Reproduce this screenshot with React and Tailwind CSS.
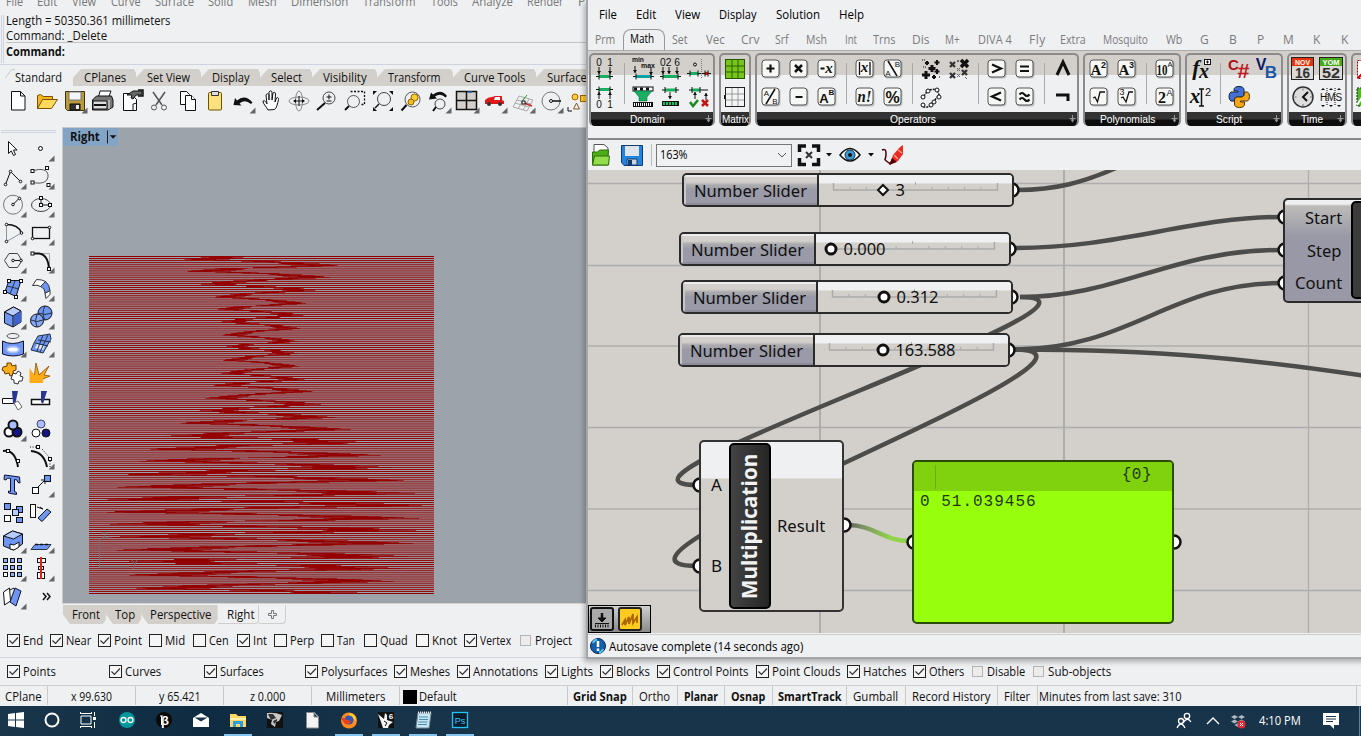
import React, { useLayoutEffect, useRef } from "react";

/* Text fitted to a given width once mounted: condensed when too wide, tracked when too narrow */
function T({ w, children, className = "" }) {
  const ref = useRef(null);
  useLayoutEffect(() => {
    const el = ref.current;
    el.style.letterSpacing = "0px";
    el.style.transform = "none";
    el.style.marginRight = "0px";
    const n = String(children).length;
    const nat = el.getBoundingClientRect ? el.offsetWidth : w;
    if (!w || n < 2) return;
    if (nat > w) {
      el.style.transformOrigin = "0 50%";
      el.style.transform = `scaleX(${w / nat})`;
      el.style.marginRight = w - nat + "px";
    } else el.style.letterSpacing = (w - nat) / (n - 1) + "px";
  }, [w, children]);
  return <span ref={ref} className={"inline-block shrink-0 whitespace-pre leading-none " + className}>{children}</span>;
}

/* A row of labels; each cell is as wide as the distance to the next stop */
function Strip({ start = 0, items, render, className }) {
  return (
    <div className={"flex overflow-hidden " + className}>
      <div className="h-full shrink-0" style={{ width: items[0][0] - start }} />
      {items.map((it, i) => (
        <div key={i} className="flex h-full shrink-0 items-center" style={{ width: (items[i + 1] ? items[i + 1][0] : it[0] + 120) - it[0] }}>
          {render ? render(it, i) : <T w={it[1]}>{it[2]}</T>}
        </div>
      ))}
    </div>
  );
}

const Corner = () => <path d="M26.5 20.5v6h-6z" fill="#666" />;
const Sq = ({ x, y }) => <rect x={x - 1.5} y={y - 1.5} width="3" height="3" fill="#fff" stroke="#111" />;
const Dot = ({ x, y }) => <circle cx={x} cy={y} r="1.3" fill="#fff" stroke="#111" />;
const Ic = ({ children, className = "h-7 w-7" }) => (
  <svg viewBox="0 0 28 28" className={"shrink-0 " + className} fill="none" stroke="#111" strokeWidth="1">{children}</svg>
);
const Cn = () => <g stroke="none"><Corner /></g>;
const BL = "#6f95f2", LB = "#b6ccff";

const topIcons = [
  <path d="M6.500 4.500h9l4.500 4.500v14h-13.500zM15.500 4.500v4.500h4.500" fill="#fff" />,
  <g><path d="M4.500 21.500v-13l3-1 3 2h9v4" fill="#f5b51c" stroke="#7a5200" /><path d="M4.500 21.500l5-9h15l-6 9z" fill="#ffd95c" stroke="#7a5200" /></g>,
  <g><path d="M4.500 4.500h19v19h-17l-2-2z" fill="#b99a3c" stroke="#3b3210" /><path d="M8 5h12v8h-12z" fill="#f4f6fb" stroke="#777" /><path d="M9 17h10v6h-10z" fill="#333" /><path d="M15 18h3v4h-3z" fill="#eee" stroke="none" /><Cn /></g>,
  <g><path d="M9 12l2-8h11l-3 8" fill="#fff" /><path d="M3.500 13l4-4h15l1.500 4v7l-5 3h-15.500z" fill="#777" stroke="#111" /><path d="M4 14h14v8h-14z" fill="#ddd" /><path d="M5 18h12" strokeWidth="2" /><path d="M20 13v9" stroke="#eee" /></g>,
  <g><path d="M6.500 6.500h7l6 6v11h-13z" fill="#fff" /><path d="M10 8l6-4h9v4h-6l-3 4-2-1 1-3z" fill="#666" /><path d="M21 3h5v6h-5" strokeWidth="1.500" /><path d="M16 23v-6l4-1" /></g>,
  <g stroke="#555"><path d="M8 5l9 13M20 5l-9 13" strokeWidth="1.500" /><circle cx="9" cy="20.500" r="2.500" /><circle cx="19" cy="20.500" r="2.500" /></g>,
  <g fill="#fff"><path d="M7.500 4.500h6l3 3v10h-9z" /><path d="M12.500 8.500h6l4 4v11h-10z" /><path d="M18.500 8.500v4h4" /></g>,
  <g><rect x="7.500" y="5.500" width="13" height="17.500" rx="1" fill="#fbe080" stroke="#6b5300" /><path d="M10.500 4.500h7v4h-7z" fill="#ddd" stroke="#333" /></g>,
  <g><path d="M4.500 18l1.500-7 2 2.500q8-7 15.500 2l-1.500 1.500q-6-5-11.500-.500l2 2z" fill="#111" stroke="none" /><Cn /></g>,
  <path d="M11 23c-2-4-5-6-5-9 2-1 3 1 4 3l-1-9c1-2 2.500-1 3 0v5l0-8c1-1.500 2.500-1.500 3 0v8l1-7c1-1 2.500-1 2.500 1l-.500 8 1.500-4c1-1 2.500 0 2 1.500-1 4-1.500 8-4 10z" fill="#fff" />,
  <g stroke="#888"><ellipse cx="14" cy="14" rx="10" ry="4" /><ellipse cx="14" cy="14" rx="3.500" ry="10" /><path d="M9 14h10M14 9v10" stroke="#111" /><path d="M8 14l3-2v4zM20 14l-3-2v4z" fill="#111" stroke="none" /></g>,
  <g><circle cx="16" cy="11" r="6" stroke="#444" /><path d="M12 16l-8 7" strokeWidth="2" /><path d="M13.500 10h5M16 7.500v5M13.500 14h5" /></g>,
  <g><path d="M9.500 4.500h14v13h-3" strokeDasharray="2 1.500" strokeWidth="1.300" /><circle cx="12.500" cy="14.500" r="6" fill="#eff0f2" stroke="#555" /><path d="M8 19l-4 4" strokeWidth="2" /></g>,
  <g><circle cx="15" cy="12" r="6.500" stroke="#444" /><path d="M10 17l-4 4" strokeWidth="1.500" /><path d="M4 4h4l-4 4zM24 4h-4l4 4zM4 24v-4l4 4zM24 24v-4l-4 4z" fill="#111" stroke="none" /></g>,
  <g><circle cx="15.500" cy="12.500" r="7.500" stroke="#555" /><path d="M9.500 18l-5 5.500" strokeWidth="2" /><circle cx="17.500" cy="10.500" r="3.500" fill="#ffcf2a" stroke="#8a6300" /><circle cx="14" cy="15" r="3" fill="#f5bd1d" stroke="#8a6300" /></g>,
  <g><path d="M4 12.500l2-7 2 2q8-6 14 1.500l-1.500 1.500q-5-5-10.500-1l2 2z" fill="#111" stroke="none" /><circle cx="15" cy="17" r="5" stroke="#444" /><path d="M11 20l-3 4" strokeWidth="2" /><Cn /></g>,
  <g><rect x="3.500" y="4.500" width="20" height="18" fill="#d3d0cb" strokeWidth="1.500" /><path d="M13.500 4v18M3 13.500h20" strokeWidth="1.500" /><path d="M15 5h4" stroke="#16b" strokeWidth="1.500" /><Cn /></g>,
  <g stroke="none"><path d="M4 13q3-3 7-3l3-1h7v4l2 1v3h-19z" fill="#e01818" /><path d="M14 10h5v3h-6z" fill="#fff" /><circle cx="8" cy="17" r="2" fill="#333" /><circle cx="19" cy="17" r="2" fill="#333" /><Corner /></g>,
  <g stroke="#aaa"><path d="M4 20l6-11 14 4-6 11zM6 16l14 4M8 13l14 4M9 22l6-11M14 23l6-11" /><path d="M14 13l4-5" stroke="#1a1" /><path d="M15 16l8 3" stroke="#c22" strokeWidth="1.500" /><Sq x={14.500} y={15.500} /><Cn /></g>,
  <g><circle cx="14" cy="14" r="9" stroke="#777" /><path d="M14 14h10" strokeWidth="1.500" /><circle cx="14" cy="14" r="1.500" fill="#fff" /><Cn /></g>,
  <g><circle cx="10" cy="10" r="3" fill="#fc3" stroke="#a60" /><rect x="15.500" y="8.500" width="6" height="6" fill="#fc3" stroke="#a60" /><path d="M11.500 16l-3 6h6z" stroke="#852" /><path d="M3 20v4h4" /></g>,
];

const sideIcons = [
  [<path d="M8.500 6.500v12l2.800-2.600 2.200 4.600 2-1-2-4.500h3.600z" fill="#fff" />, <g><circle cx="12.500" cy="13.500" r="2" /><Cn /></g>],
  [<g><path d="M5.500 21.500l5-13 10 10" /><Dot x={5.500} y={21.500} /><Dot x={10.500} y={8.500} /><Dot x={20.500} y={18.500} /><Cn /></g>,
    <g><path d="M5 8C12 5 21 6 20 14 19 20 12 21 5 19.500" stroke="#555" /><Sq x={4.500} y={8} /><Sq x={19} y={5} /><Sq x={4.500} y={19.500} /><Sq x={20.500} y={22} /><Cn /></g>],
  [<g><circle cx="13" cy="13.700" r="9.500" stroke="#777" /><path d="M13 13.500l6-6" /><Dot x={13} y={13.500} /><Dot x={19.500} y={7.500} /><Cn /></g>,
    <g><ellipse cx="13" cy="14" rx="9.500" ry="6.500" stroke="#444" /><path d="M13 7v7h9" /><Sq x={13} y={14} /><Sq x={13} y={7} /><Sq x={22} y={14} /><Cn /></g>],
  [<g><path d="M6.500 5.500v17l15-8.500" stroke="#8a93a5" /><path d="M6.500 5.500q12 0 15 8.500" strokeWidth="1.500" /><Dot x={6.500} y={5.500} /><Dot x={6.500} y={22.500} /><Dot x={21.500} y={14} /><Cn /></g>,
    <g><rect x="4.500" y="8.500" width="17" height="11" strokeWidth="1.300" /><Dot x={4.500} y={19.500} /><Dot x={21.500} y={8.500} /><Cn /></g>],
  [<g><path d="M4.500 13.500l4.500-7h8.500l4.500 7-4.500 7h-8.500z" stroke="#444" /><path d="M13 13.500h8" /><Dot x={13} y={13.500} /><Dot x={21} y={13.500} /><Cn /></g>,
    <g><path d="M5 6.500h16.500v15" stroke="#aaa" /><path d="M5 6.500h6q9 1 10 15" strokeWidth="2" /><Sq x={4.500} y={6.500} /><Sq x={21} y={22} /><Cn /></g>],
  [<g><path d="M9 5.500h12l-5 16-11-5z" fill={BL} /><path d="M15 6l-5 13M7 11l12 3" stroke="#234" /><Sq x={9} y={6} /><Sq x={21} y={6} /><Sq x={5} y={17} /><Sq x={16} y={22} /><Cn /></g>,
    <g><path d="M4.500 10.500l4-6q6 0 9 2l-5 5q-3-2-8-1z" fill="#fff" stroke="#333" /><path d="M12.500 11.500l5-5q4 3 4.500 9l-5 3q0-5-4.500-7z" fill={BL} stroke="#234" /><path d="M17 18.500l5-3v4l-4 4z" fill="#fff" stroke="#333" /><Cn /></g>],
  [<g><path d="M4.500 9l9-5 7.500 4v11l-8 5-8.500-4z" fill={BL} /><path d="M4.500 9l9-5 7.500 4-8 5z" fill={LB} /><path d="M13 13v11" /><path d="M14 13l7-5v11l-7 4z" fill="#3c63cf" stroke="none" /><Cn /></g>,
    <g><circle cx="17" cy="10" r="7" fill={BL} /><path d="M10 10q7 3 14 0M17 3q-4 7 0 14" stroke="#234" /><circle cx="9" cy="17.500" r="6.500" fill="#86a6f5" /><path d="M3 17q6 3 12 0M9 11q-3 7 0 13" stroke="#234" /><Cn /></g>],
  [<g><ellipse cx="13" cy="5" rx="6" ry="2.500" stroke="#555" /><path d="M2.500 10q10 5 21 0v13q-10 4-21 0z" fill={BL} stroke="#113" /><ellipse cx="13" cy="18.500" rx="6" ry="3" fill="#fff" stroke="#a5bbf5" strokeWidth="2" /><Cn /></g>,
    <g><path d="M10 5l12-2 1 5-8 14-12-3 3-7z" fill={BL} stroke="#234" /><path d="M9 13l8 2-2 4-8-2z" fill="#dce6ff" stroke="none" /><path d="M7 12l13 3M10 9l13 2M15 4l-6 16M20 4l-8 17" stroke="#234" /><Cn /></g>],
  [<g><path d="M3 8l4-1 0-3 4 0 1 3 4-1 0 5-3 1 1 4-4 1-1-3-4 1-1-3-2-1z" fill="#ffae1a" stroke="#643b00" /><path d="M13 14l3 1 2-3 3 2-1 3 3 1-1 4-3 0-1 3-4-1 0-3-3-1z" fill="#fff" stroke="#333" /></g>,
    <g><path d="M1.500 24v-15l5 7 1.500-12 3 12 10-9-5 9 6 1-7 3v4z" fill="#ffab16" stroke="none" /><path d="M6.500 16l1.500-12 3 12 10-9-5 9 6 1-7 3" stroke="#8c4d00" strokeWidth=".8" /></g>],
  [<g><path d="M2.500 11.500h11v5h-11z" fill="#fff" /><path d="M12 4h6l-3 14-2-2z" fill="#283593" stroke="none" /><path d="M14 16l4-2 4 6-4 3z" fill="#fff" stroke="#666" /></g>,
    <g><path d="M3.500 12.500h18v5h-18z" fill="#fff" strokeWidth="1.500" /><path d="M13 4h6l-4 13-2-2z" fill="#283593" stroke="none" /></g>],
  [<g strokeWidth="2"><circle cx="9" cy="17" r="4.500" fill="#fff" /><circle cx="17" cy="17" r="4.500" fill="#15158a" /><circle cx="13" cy="10" r="4.500" fill="#a9bdff" /><Cn /></g>,
    <g><circle cx="13" cy="9" r="4" fill="#a9bdff" stroke="#446" /><circle cx="8" cy="18" r="4" fill="#fff" /><circle cx="18" cy="18" r="4" fill="#15158a" /></g>],
  [<g><path d="M3 8q12-2 15 16" strokeWidth="2" /><Sq x={8} y={8} /><Sq x={18} y={18} /></g>,
    <g><path d="M3 8q13 1 16 16" strokeWidth="2" /><path d="M2 4h8M14 6l7 8M22 18v6" strokeDasharray="1 1.500" /><Sq x={10} y={4} /><Sq x={22} y={16} /><Cn /></g>],
  [<path d="M4.500 4l15 2 .500 6-2-.500-1-2.500-2.500-.500v12l2 1v2l-8-1.500v-2l2 .500v-13l-3-.500-1.500 2-2-.500z" fill={BL} stroke="#113" />,
    <g><path d="M8 18l9-9M17 9v4M17 9h-4" /><rect x="4.500" y="16.500" width="6" height="6" fill="#fff" /><rect x="16.500" y="4.500" width="6" height="6" fill={BL} /><Cn /></g>],
  [<g><rect x="4.500" y="4.500" width="6" height="6" fill={BL} /><rect x="16.500" y="7.500" width="6" height="6" fill={BL} /><rect x="12.500" y="10.500" width="6" height="6" fill={LB} /><rect x="4.500" y="16.500" width="6" height="6" fill="#fff" /><rect x="16.500" y="18.500" width="6" height="5" fill={BL} /></g>,
    <g><rect x="2.500" y="5.500" width="5" height="13" fill="#fff" /><path d="M9 8l6 2M15 10l-3-2" /><path d="M10 19l9-9 4 3-9 9.500z" fill={BL} /></g>],
  [<g><path d="M3.500 9l9-5 10 3v10l-9 6-10-4z" fill={BL} /><path d="M3.500 9l9-5 10 3-9 5z" fill={LB} /><path d="M10 17l4 1 5-3v5l-5 3-4-1z" fill="#fff" /><Cn /></g>,
    <g><path d="M3 22.500l4-5h16l-4 5z" fill={BL} stroke="#234" /><path d="M7 17.500h15" strokeWidth="1.500" strokeDasharray="3 2" /><Cn /></g>],
  [<g fill="#8fadf7">{[4.500, 11.500, 18.500].map(y => [3.500, 10.500, 17.500].map(x => <rect key={x + "_" + y} x={x} y={y - 1} width="4" height="4" fill={y > 15 && x < 9 ? "#fff" : "#8fadf7"} />))}<Cn /></g>,
    <g fill="#fff"><rect x="9.500" y="3.500" width="8" height="4" /><rect x="10.500" y="11.500" width="5" height="3" /><rect x="9.500" y="17.500" width="7" height="6" /><path d="M13 2v22" stroke="#d22" strokeWidth="2" /><Cn /></g>],
  [<g><path d="M3.500 9l6-4 1 13-6 4z" fill="#fff" /><path d="M10 7l4-2 1 3" /><path d="M15 5l6 3-5 15-6-4z" fill={BL} stroke="#113" /><Cn /></g>,
    <path d="M15 10l3 3.500-3 3.500M19 10l3 3.500-3 3.500" strokeWidth="1.500" />],
];

/* Ribbon icons */
const Btn = ({ children }) => (
  <g><rect x="5.500" y="5.500" width="18" height="18" rx="3" fill="#0003" stroke="none" /><rect x="5" y="5" width="17" height="17" rx="3" fill="#f7f7f5" stroke="#555" />{children}</g>
);
const Tx = ({ x = 13.500, y = 18, s = 12, f = "Liberation Sans", b = "bold", i, c = "#111", children, w }) => (
  <text x={x} y={y} fontSize={s} fontFamily={f} fontWeight={b} fontStyle={i ? "italic" : "normal"} fill={c} stroke="none" textAnchor="middle" textLength={w} lengthAdjust="spacingAndGlyphs">{children}</text>
);
const SE = "Liberation Serif";
const Ar = ({ x, y, d = 1 }) => <g><path d={`M${x} ${y}v${7 * d}`} /><path d={`M${x - 2} ${y + 4 * d}h4l-2 ${3 * d}z`} fill="#111" stroke="none" /></g>;
const Gr = ({ x = 6, y, w = 14, c = "#18b060" }) => <g><rect x={x} y={y - 1.500} width={w} height="3" fill={c} stroke="none" /><path d={`M${x} ${y - 3}v6M${x + w} ${y - 3}v6M${x - 3} ${y}h3M${x + w} ${y}h3`} /></g>;
const SEP = "sep";
const panels = [
  { name: "Domain", w: 35, plus: true, cols: [
    [<g><Tx x={8} y={10.500} s={10} b="normal">0</Tx><Tx x={19} y={10.500} s={10} b="normal">1</Tx><Ar x={8} y={12} /><Ar x={19} y={12} /><Gr y={21.500} x={8} w={11} /></g>, <g><Gr y={6.500} x={8} w={11} /><Ar x={8} y={16} d={-1} /><Ar x={19} y={16} d={-1} /><Tx x={8} y={24.500} s={10} b="normal">0</Tx><Tx x={19} y={24.500} s={10} b="normal">1</Tx></g>],
    SEP,
    [<g><Tx x={9} y={6.500} s={8} w={12}>min</Tx><Tx x={19} y={12.500} s={8} w={14}>max</Tx><Ar x={6} y={11} /><Ar x={22} y={13} /><Gr y={21.500} x={7} w={15} c="#0aa5a0" /></g>, <g><rect x="4" y="4" width="20" height="4" fill="#fff" stroke="#111" /><path d="M5 6h18" strokeDasharray="3 3" strokeWidth="3" /><path d="M5 8h18l-5 6v4h-8v-4z" fill="#18b060" stroke="#064" strokeWidth=".5" /><path d="M4 21.500h20" strokeWidth="5" /><path d="M5 21.500h18" stroke="#fff" strokeWidth="3" strokeDasharray="1 1" /></g>],
    [<g><Tx x={13} y={10.500} s={10} b="normal" w={20}>02 6</Tx><Ar x={6} y={12} /><Ar x={12} y={12} /><Ar x={20} y={12} /><Gr y={21.500} x={6} w={15} /></g>, <g><Gr y={7} x={8} w={11} /><Ar x={13} y={9} /><path d="M5 20.500h17" stroke="#111" strokeWidth="5" /><path d="M6 20.500h15" stroke="#18c060" strokeWidth="3" strokeDasharray="2 1" /></g>],
    [<g><circle cx="10" cy="9.500" r="1.500" /><path d="M16.500 4v20" strokeDasharray="1 1" stroke="#777" /><Gr y={18.500} x={5} w={8} /><Gr y={18.500} x={20} w={3} c="#e01010" /></g>, <g><Gr y={7} x={7} w={8} /><path d="M18 7h5" /><Ar x={10} y={16} d={-1} /><Ar x={21} y={17} d={-1} /><path d="M5 19l3 4 5-6" stroke="#1a8a1a" strokeWidth="2.500" /><path d="M17 17l6 6M23 17l-6 6" stroke="#c01515" strokeWidth="2.500" /></g>],
  ] },
  { name: "Matrix", w: 27, cols: [
    [<g><rect x="4.500" y="4.500" width="19" height="19" fill="#76c41c" stroke="#255500" /><path d="M11 4v20M17 4v20M4 11h20M4 17h20" stroke="#2c6300" /></g>, <g><rect x="4.500" y="4.500" width="19" height="19" fill="#f4f4f4" stroke="#222" /><path d="M11 5v18M17 5v18M5 11h18M5 17h18" stroke="#999" /><path d="M3.500 12v4" /></g>],
  ] },
  { name: "Operators", w: 46, plus: true, cols: [
    [<Btn><path d="M9.500 13.500h8M13.500 9.500v8" strokeWidth="2.200" /></Btn>, <Btn><Tx x={9.500} y={13} s={8} b="normal">A</Tx><Tx x={18} y={21} s={8} b="normal">B</Tx><path d="M9 21l9-15" strokeWidth="1.500" /></Btn>],
    [<Btn><path d="M10 10l7 7M17 10l-7 7" strokeWidth="2.500" /></Btn>, <Btn><path d="M10.500 14h7" strokeWidth="2" /></Btn>],
    [<Btn><path d="M7.500 13.500h4" strokeWidth="2" /><Tx x={16} s={15} f={SE} i>x</Tx></Btn>, <Btn><Tx x={11} y={20} s={13}>A</Tx><Tx x={18.500} y={12} s={8}>B</Tx></Btn>],
    SEP,
    [<Btn><Tx s={15} f={SE} i y={17}>x</Tx><path d="M8.500 7v13M19 7v13" strokeWidth="1.300" /></Btn>, <Btn><Tx s={17} f={SE} i y={19} w={14}>n!</Tx></Btn>],
    [<Btn><Tx x={9} y={21} s={8} b="normal">A</Tx><Tx x={18.500} y={12} s={8} b="normal">B</Tx><path d="M9 6l9 15" strokeWidth="1.500" /></Btn>, <Btn><Tx s={16} y={19.500}>%</Tx></Btn>],
    SEP,
    [<g><path d="M9 16v8M5 20h8M15 10v7M11.500 13.500h7" strokeWidth="3" /><path d="M20 5v5M17.500 7.500h5M20 14v5M17.500 16.500h5M10 6v4M8 8h4M17 20v4M15 22h4" strokeWidth="2" /><path d="M5 5h3M6 12h3M22 22h2" strokeDasharray="1 1" /></g>, <g fill="#fff"><path d="M7 13l4-6 9-1 2 6-5 6-5 6H6" fill="none" strokeDasharray="2 1" strokeWidth="1.500" /><circle cx="6" cy="14" r="2" /><circle cx="11" cy="8" r="2" /><circle cx="20" cy="7" r="2" /><circle cx="22" cy="14" r="2" /><circle cx="17" cy="19" r="2" /><circle cx="6" cy="22" r="2" /><circle cx="14" cy="22" r="2" /></g>],
    [<g><path d="M16 5l7 7M23 5l-7 7" strokeWidth="3.500" /><path d="M5 7l5 5M10 7l-5 5M5 18l5 5M10 18l-5 5M17 15l5 5M22 15l-5 5" strokeWidth="2.300" stroke="#333" /><path d="M12 13l3 3M15 13l-3 3M12 5l2 2M14 5l-2 2M12 19l3 3M15 19l-3 3M20 22l2 2" stroke="#667" /></g>, <g />],
    SEP,
    [<Btn><path d="M9 9.500l9 4-9 4" strokeWidth="2.200" /></Btn>, <Btn><path d="M18 9.500l-9 4 9 4" strokeWidth="2.200" /></Btn>],
    [<Btn><path d="M9 11.500h9M9 16h9" strokeWidth="2.200" /></Btn>, <Btn><path d="M8.500 11.500q2.500-3 5 0t5 0M8.500 16.500q2.500-3 5 0t5 0" strokeWidth="2" /></Btn>],
    SEP,
    [<path d="M8 20l6-13 6 13" strokeWidth="3" />, <path d="M7 12h12v6" strokeWidth="3" />],
  ] },
  { name: "Polynomials", w: 55, plus: true, cols: [
    [<Btn><Tx x={11} y={20} s={15} f={SE}>A</Tx><Tx x={18.500} y={13} s={9}>2</Tx></Btn>, <Btn><path d="M8 15l2-1 2.500 5 2.500-10h5" strokeWidth="1.300" /></Btn>],
    [<Btn><Tx x={11} y={20} s={15} f={SE}>A</Tx><Tx x={18.500} y={13} s={9}>3</Tx></Btn>, <Btn><Tx x={9} y={12} s={9} b="normal">3</Tx><path d="M8 15l2-1 3 5 3-10h4" strokeWidth="1.300" /></Btn>],
    SEP,
    [<Btn><Tx x={11} y={20} s={15} f={SE} w={11}>10</Tx><Tx x={19} y={11.500} s={8} b="normal" w={5}>A</Tx></Btn>, <Btn><Tx x={11} y={20} s={16} f={SE}>2</Tx><Tx x={18.500} y={13} s={9} b="normal">A</Tx></Btn>],
  ] },
  { name: "Script", w: 26, plus: true, cols: [
    [<g><Tx x={9} y={20} s={22} f={SE} i>f</Tx><Tx x={17} y={23} s={20} f={SE} i>x</Tx><rect x="17.500" y="4.500" width="6" height="5" fill="#fff" /><path d="M19 7h3M20.500 5.500v3" /></g>, <g><Tx x={8} y={20} s={21} f={SE} i>x</Tx><path d="M12 6h5M12 23h5M14.500 6v17" strokeWidth="1.500" /><Tx x={21} y={13} s={11} b="normal">2</Tx></g>],
    SEP,
    [<g><Tx x={8.500} y={15} s={15} c="#b01018">C</Tx><Tx x={18.500} y={23} s={20} c="#c01a22" w={12}>#</Tx></g>, <g strokeWidth="1"><path d="M9 7q0-3.500 5-3.500t5 3.500v4q0 3-3 3h-4q-3 0-3 4h-3q-2-1-2-4.500t2-4.500h7v-1h-4z" fill="#4470d8" stroke="#123" /><path d="M19.500 9h3q2 1 2 4.500t-2 4.500h-7v1h4v2q0 3.500-5 3.500t-5-3.500v-4q0-3 3-3h4q3 0 3-5z" fill="#f4a817" stroke="#530" /></g>],
    [<g><Tx x={8} y={15} s={16} c="#101865">V</Tx><Tx x={18} y={23} s={17} c="#1b56a8">B</Tx></g>, <g />],
  ] },
  { name: "Time", w: 22, plus: true, cols: [
    [<g><rect x="2.500" y="2.500" width="22" height="22" fill="#ddd9d4" stroke="#222" /><rect x="3" y="3" width="21" height="8" fill="#e8320c" stroke="none" /><Tx y={10} s={8} c="#fff" w={15}>NOV</Tx><Tx y={22.500} s={14} w={15} c="#333">16</Tx></g>, <g><circle cx="14" cy="14" r="10" fill="#ddd" stroke="#333" strokeWidth="1.500" /><path d="M19 9l-5 5 4 4" strokeWidth="2" /><path d="M14 5.500v2M14 21v2M5.500 14h2M21 14h2" stroke="#777" /></g>],
    [<g><rect x="2.500" y="2.500" width="23" height="22" fill="#ddd9d4" stroke="#222" /><rect x="3" y="3" width="22" height="8" fill="#48a818" stroke="none" /><Tx x={14} y={10} s={8} c="#fff" w={17}>YOM</Tx><Tx x={14} y={22.500} s={14} w={18} c="#333">52</Tx></g>, <g><Tx x={14} y={17.500} s={10} b="normal" w={22}>HMS</Tx><path d="M10 5v18M18 5v18" strokeDasharray="1 1" /><path d="M4 7l2-2 2 2zM12 7l2-2 2 2zM20 7l2-2 2 2zM4 22l2 2 2-2zM12 22l2 2 2-2zM20 22l2 2 2-2z" fill="#111" stroke="none" /></g>],
  ] },
  { name: " ", w: 0, cols: [[<g><rect x="4.500" y="5.500" width="18" height="18" stroke="#900" strokeDasharray="2 1" fill="#fff" /><path d="M5 23l8-8" stroke="#c00" strokeWidth="2" /></g>, <g><path d="M4 5h18v18h-18z" fill="#54b828" stroke="#222" strokeDasharray="2 1" /><path d="M4 22l8-12" stroke="#fff" strokeWidth="2" /></g>]] },
];

function Ribbon() {
  return (
    <div className="flex h-[75px] shrink-0 gap-1 overflow-hidden bg-linear-to-b from-[#d3d0cb] from-[24px] to-[#eff0f2] to-[24px] pl-px pt-[2px]">
      {panels.map((p, i) => (
        <div key={i} className="flex h-[73px] shrink-0 flex-col overflow-hidden rounded-[5px] border-2 border-b-0 border-[#8c8c8c]">
          <div className="flex h-[57px] shrink-0">
            {p.cols.map((c, j) => c === SEP ? (
              <div key={j} className="flex w-[10px] justify-center py-2"><div className="w-px bg-[#aaa]" /></div>
            ) : (
              <div key={j} className="flex w-7 flex-col"><Ic>{c[0]}</Ic><Ic>{c[1]}</Ic></div>
            ))}
          </div>
          <div className={"relative flex h-[14px] items-center justify-center bg-linear-to-b from-[#333] from-50% to-[#0c0c0c] to-60% font-['Liberation_Sans'] text-[11px] text-white " + (p.plus ? "pr-[9px]" : "")}>
            <T w={p.w}>{p.name}</T>
            {p.plus && <svg viewBox="0 0 7 8" className="absolute right-[1px] top-[3px] h-2 w-[7px]"><path d="M3.500 0v6M.5 3.500h6" stroke="#999" /><path d="M1.500 4.500h4l-2 3z" fill="#999" /></svg>}
          </div>
        </div>
      ))}
    </div>
  );
}

/* Viewport contours: evenly spaced lines crossed by a winding section curve */
const STEP = 2.0675;
const lerp = (t, a) => { for (let i = 1; i < a.length; i++) if (t <= a[i][0]) { const k = (t - a[i - 1][0]) / (a[i][0] - a[i - 1][0]); return a[i - 1][1] + k * (a[i][1] - a[i - 1][1]); } return a[a.length - 1][1]; };
const AMP = [[0, 76], [15, 72], [40, 45], [88, 35], [115, 38], [150, 60], [190, 108], [215, 130], [245, 155], [290, 145], [338, 120]];
const LOBE = [[-0.62, -0.17], [-0.78, -0.22], [-0.95, -0.33], [-1, -0.4], [-0.62, -0.02], [-0.25, 0.28], [0.12, 0.6], [0.25, 0.8], [0.33, 0.95], [0.42, 1.05], [0.22, 0.85], [-0.1, 0.5], [-0.42, 0.12]];
const bars = Array.from({ length: 337 }, (_, r) => {
  const ph = ((r - 14 + 12.65 * 4) % 12.65 + 3) % 12.65;
  const [a, b] = LOBE[Math.floor(ph)];
  const A = lerp(r, AMP), x0 = 171 + a * A, x1 = 171 + b * A, l = x1 - x0;
  return [r + 1, x0, l, x0 + l * (0.2 + 0.2 * Math.sin(r * 1.7)), l * 0.55];
});

function Check({ it }) {
  const [, w, text, state] = it;
  return (
    <div className="flex items-center">
      {state === "dim"
        ? <span className="mr-1 h-[11px] w-[11px] shrink-0 border border-[#b5b5b5] bg-[#eeecea]" />
        : <span className="mr-[3px] flex h-[13px] w-[13px] shrink-0 border border-[#222] bg-[#f6f6f6]">
          {state !== "off" && <svg viewBox="0 0 11 11" className="h-[11px] w-[11px]"><path d="M1.500 5.500l3 3 5.500-6" fill="none" stroke="#333" strokeWidth="1.200" /></svg>}
        </span>}
      <T w={w}>{text}</T>
    </div>
  );
}

const tabs = [[73, 42, "CPlanes"], [136, 43, "Set View"], [201, 38, "Display"], [260, 31, "Select"], [312, 44, "Visibility"], [377, 53, "Transform"], [453, 61, "Curve Tools"], [536, 40, "Surface"]];

function Rhino() {
  return (
    <div className="flex h-[706px] w-full flex-col bg-[#eff0f2]">
      <Strip className="h-[12px] items-start text-[#777] [&>div]:h-0 [&>div]:pt-[2px]" items={[[6, 17, "File"], [37, 20, "Edit"], [72, 24, "View"], [111, 30, "Curve"], [155, 39, "Surface"], [208, 25, "Solid"], [248, 29, "Mesh"], [291, 57, "Dimension"], [363, 53, "Transform"], [431, 27, "Tools"], [472, 41, "Analyze"], [527, 37, "Render"], [578, 0, "P"]]} />
      <div className="flex h-[53px] border-b border-[#cfd3e0] pt-[1px]">
        <div className="ml-px mr-[2px] mt-[2px] h-12 w-[3px] border-x border-[#cfd3e0]" />
        <div className="flex w-[580px] flex-col">
          <div className="flex h-[15px] items-center"><T w={164}>Length = 50350.361 millimeters</T></div>
          <div className="flex h-[15px] items-center border-b border-[#c5c3be] pt-px"><T w={101}>Command: _Delete</T></div>
          <div className="flex h-[17px] items-center font-bold"><T w={59}>Command:</T></div>
        </div>
      </div>
      <div className="flex h-[21px] pt-1">
        <div className="flex h-[17px] w-[73px] items-center pl-[5px]">
          <svg viewBox="0 0 10 17" className="h-[17px] w-[10px]"><path d="M0 9L7 .5h3" fill="none" stroke="#c4cbcf" /></svg>
          <T w={47} className="pt-px">Standard</T>
        </div>
        <Strip start={73} className="h-[17px]" items={tabs} render={([, w, t]) => (
          <div className="flex h-full w-full items-center bg-[#d3d0cb] pl-[11px] pt-px [clip-path:polygon(0_100%,0_50%,8px_0,calc(100%-2px)_0,100%_4px,100%_100%)]"><T w={w}>{t}</T></div>
        )} />
      </div>
      <div className="flex h-[41px] pl-[5px] pt-px">{topIcons.map((d, i) => <Ic key={i}>{d}</Ic>)}</div>
      <div className="flex h-[497px]">
        <div className="flex w-[62px] shrink-0 flex-col">
          <div className="mb-[2px] ml-px mt-[3px] h-[3px] w-[55px] border-y border-[#cfd3e0]" />
          <div className="grid w-14 grid-cols-2">{sideIcons.flat().map((d, i) => <Ic key={i}>{d}</Ic>)}</div>
        </div>
        <div className="flex w-[526px] flex-col">
          <div className="relative h-[476px] border-l border-t border-[#c9c8c4] bg-[#9ca3ab]">
            <div className="flex h-[18px] w-[55px] items-center bg-[#84a4c6] pl-[7px] text-[12.500px] font-bold text-[#111]"><T w={30}>Right</T>
              <svg viewBox="0 0 12 16" className="ml-[7px] h-4 w-3"><path d="M.5 1v14" stroke="#111" /><path d="M3 6h7l-3.500 4z" fill="#111" /></svg>
            </div>
            <svg className="absolute left-[26px] top-[128px]" width="345" height="339" viewBox="0 0 345 339">
              {Array.from({ length: 164 }, (_, i) => <rect key={i} x="0" y={i * STEP} width="345" height="1" fill="#930000" />)}
              {bars.map(([y, x, w, x2, w2]) => <g key={y} fill="#930000"><rect x={x} y={y} width={w} height="1" opacity=".68" /><rect x={x2} y={y} width={w2} height="1" opacity=".95" /></g>)}
              <path d="M10.500 283v28h30M13 277h5l-4 5h5M43 304l2 4M48 304l-4 9" fill="none" stroke="#6f6f6f" />
            </svg>
          </div>
          <div className="flex h-[21px] border-t border-[#d5d4d0] pl-px pt-px">
            {[["Front", 28], ["Top", 20], ["Perspective", 61]].map(([t, w]) => (
              <div key={t} className="flex h-[19px] items-center bg-[#d3d0cb] pl-[9px] pr-[6px] pt-px [clip-path:polygon(0_0,100%_0,100%_75%,calc(100%-3px)_100%,7px_100%,0_50%)]"><T w={w}>{t}</T></div>
            ))}
            <div className="flex h-[19px] items-center rounded-br border-b border-r border-[#cfcecb] pl-[9px] pr-[4px] pt-[2px]"><T w={28}>Right</T></div>
            <div className="flex h-[19px] w-[27px] items-center justify-center rounded-br border-b border-r border-[#cfcecb]"><svg viewBox="0 0 9 9" className="h-[9px] w-[9px]"><path d="M3.500.5h2v3h3v2h-3v3h-2v-3h-3v-2h3z" fill="none" stroke="#777" /></svg></div>
          </div>
        </div>
      </div>
      <Strip className="h-[34px] border-b border-[#d3d6e2]" items={[[7, 20, "End"], [50, 25, "Near"], [98, 28, "Point"], [149, 20, "Mid", "off"], [193, 20, "Cen", "off"], [237, 14, "Int"], [274, 24, "Perp", "off"], [321, 18, "Tan", "off"], [364, 28, "Quad", "off"], [416, 25, "Knot", "off"], [464, 31, "Vertex"], [520, 37, "Project", "dim"]]} render={(it) => <Check it={it} />} />
      <Strip className="h-[28px] border-b border-[#cfcecb]" items={[[7, 33, "Points"], [109, 36, "Curves"], [204, 44, "Surfaces"], [305, 66, "Polysurfaces"], [394, 40, "Meshes"], [457, 65, "Annotations"], [545, 32, "Lights"], [600, 34, "Blocks"], [657, 76, "Control Points"], [756, 68, "Point Clouds"], [847, 43, "Hatches"], [913, 35, "Others"], [972, 38, "Disable", "dim"], [1033, 63, "Sub-objects", "dim"]]} render={(it) => <Check it={it} />} />
      <Strip className="h-[19px]" items={[[0, 37, "CPlane"], [48, 41, "x 99.630"], [136, 42, "y 65.421"], [224, 35, "z 0.000"], [312, 59, "Millimeters"], [400, 38, "Default", "sw"], [568, 54, "Grid Snap", "b"], [633, 31, "Ortho"], [678, 34, "Planar", "b"], [725, 34, "Osnap", "b"], [773, 64, "SmartTrack", "b"], [847, 45, "Gumball"], [906, 78, "Record History"], [998, 26, "Filter"], [1038, 143, "Minutes from last save: 310", "l"], [1357, 0, " "]]} render={([, w, t, k]) => (
        <div className={"flex h-full w-full items-center border-r border-[#cbcac7] pt-[2px] " + (k === "sw" ? "justify-start " : k === "l" ? "justify-start pl-px " : "justify-center ") + (k === "b" ? "font-bold" : "")}>
          {k === "sw" && <span className="ml-[3px] mr-[2px] h-[14px] w-[14px] bg-black" />}<T w={w}>{t}</T>
        </div>
      )} />
    </div>
  );
}

const Nub = ({ className, left }) => (
  <svg className={"absolute h-4 w-2.5 " + className} viewBox="0 0 10 16"><path d={left ? "M9 1.500a6.500 6.500 0 0 0 0 13" : "M1 1.500a6.500 6.500 0 0 1 0 13"} fill="#fff" stroke="#111" strokeWidth="2.500" /></svg>
);

function Slider({ className, knob, w, value, diamond }) {
  return (
    <div className={"absolute flex h-[34px] w-[332px] " + className}>
      <Nub className="-right-[7px] top-[9px]" />
      <div className="relative flex h-full w-full overflow-hidden rounded-[5px] border-2 border-[#2b2b2b] bg-[#d3d0cb]">
        <div className="flex w-[133px] shrink-0 items-center justify-center border-2 border-r-0 border-t-white/80 border-l-[#c8c8c8] border-b-[#8c8c98] bg-linear-to-b from-[#d3d0cb] from-20% via-[#adadb0] via-30% to-[#9a9aa8] to-50% pr-[3px] text-[17px] text-[#111]"><T w={113}>Number Slider</T></div>
        <div className="flex-1 border-l-2 border-[#2b2b2b] bg-linear-to-b from-[#eff0f2] from-[8px] to-[#d3d0cb] to-[9px]">
          <svg viewBox="0 0 192 30" className="h-[30px] w-[192px]">
            <path d="M14.500 8v7h164v-7" fill="none" stroke="#aaa" strokeWidth="1.500" />
            {[1, 2, 3, 4, 5, 6, 7, 8, 9].map(i => <path key={i} d={`M${14.5 + i * 16.4} ${i === 5 ? 7 : 12}v3`} stroke="#aaa" />)}
            {diamond ? <path d={`M${knob} 10l5 5-5 5-5-5z`} fill="#fff" stroke="#111" strokeWidth="2" /> : <circle cx={knob} cy="15" r="5" fill="#fff" stroke="#111" strokeWidth="3" />}
            <text x={knob + 12.500} y="21" textLength={w} fontSize="16.500" fontFamily="Noto Sans, sans-serif" fill="#111">{value}</text>
          </svg>
        </div>
      </div>
    </div>
  );
}

function Canvas() {
  return (
    <div className="relative h-[463px] shrink-0 overflow-hidden bg-[#d3d0cb] font-['Noto_Sans',sans-serif]">
      <svg className="absolute left-0 top-0" width="773" height="463" viewBox="588 170 773 463" fill="none">
        <defs><linearGradient id="wire" x1="0" x2="1" y1="0" y2="0"><stop offset="0" stopColor="#5c5f58" /><stop offset=".25" stopColor="#7e9564" /><stop offset=".7" stopColor="#8fd44b" /></linearGradient></defs>
        <path d="M820 170v463M1064 170v463" stroke="#adadad" strokeWidth="2" />
        <path d="M1308.500 170v463M588 183.500h773M588 265.500h773M588 346h773M588 427.500h773M588 509h773M588 590.500h773" stroke="#adadad" strokeWidth="1.300" />
        <g stroke="#4c4c4a" strokeWidth="4.500">
          <path d="M1018 190C1056 190 1084 182 1116 168" />
          <path d="M1016 248C1120 248 1190 217 1281 217" />
          <path d="M1020 297C1120 297 1170 250 1281 250" />
          <path d="M1014 349.500C1130 349.500 1170 283 1281 283" />
          <path d="M1014 349.500C1160 349.500 1260 360 1366 376" />
          <path d="M1020 297C1151 297 566 485 697 485" />
          <path d="M1014 349.500C1158 349.500 553 566 697 566" />
          <path d="M848 525C874 525 884 541 909 541" stroke="url(#wire)" />
        </g>
      </svg>
      <Slider className="left-[94px] top-[3px]" knob={64} w={8} value="3" diamond />
      <Slider className="left-[91px] top-[62px]" knob={15} w={42} value="0.000" />
      <Slider className="left-[93px] top-[110px]" knob={66} w={42} value="0.312" />
      <Slider className="left-[90px] top-[163px]" knob={68} w={60} value="163.588" />

      <Nub left className="left-[103px] top-[307px]" />
      <Nub left className="left-[103px] top-[388px]" />
      <Nub className="left-[255px] top-[347px]" />
      <div className="absolute left-[111px] top-[270px] flex h-[172px] w-[145px] rounded-[5px] border-2 border-[#333] bg-linear-to-b from-[#eff0f2] from-[36px] to-[#d3d0cb] to-[37px] text-[17px] text-[#111]">
        <div className="flex w-[28px] shrink-0 flex-col pl-[10px] pt-[34px]"><T className="mb-[64px]">A</T><T>B</T></div>
        <div className="mt-[1px] flex h-[166px] w-[42px] shrink-0 items-center justify-center rounded-[5px] border-2 border-black bg-linear-to-r from-[#444] to-[#252525]">
          <div className="-rotate-90 text-[21px] font-bold text-[#f2f2f2]"><T w={146}>Multiplication</T></div>
        </div>
        <div className="pl-[6px] pt-[75px]"><T w={48}>Result</T></div>
      </div>

      <Nub left className="left-[317px] top-[364px]" />
      <Nub className="left-[585px] top-[364px]" />
      <div className="absolute left-[324px] top-[290px] h-[164px] w-[262px] overflow-hidden rounded-[5px] border-2 border-[#2c4a08] bg-[#97ff0d] font-['Liberation_Mono'] text-[16px] text-[#243609]">
        <div className="relative flex h-[29px] items-center justify-end bg-[#80d20e] pb-[4px] pr-[20px]"><div className="absolute left-[21px] top-[3px] h-[24px] w-px bg-[#6dae18]" /><T w={30}>{"{0}"}</T></div>
        <div className="flex pl-[6px] pt-[3px]"><T w={116}>0 51.039456</T></div>
      </div>

      {["top-[39px]", "top-[72px]", "top-[105px]"].map(c => <Nub key={c} left className={"left-[688px] " + c} />)}
      <div className="absolute left-[695px] top-[28px] flex h-[105px] w-[120px] rounded-[5px] border-2 border-[#2b2b2b] bg-linear-to-b from-[#eff0f2] from-[4px] via-[#bdbbb9] via-[6px] to-[#9898a6] to-[38px] text-[17px] text-[#111]">
        <div className="flex w-[66px] shrink-0 flex-col items-end gap-[15.500px] pr-[9px] pt-[9px]"><T w={37}>Start</T><T w={35}>Step</T><T w={47}>Count</T></div>
        <div className="mt-[1px] h-[98px] w-12 shrink-0 rounded-[5px] border-2 border-black bg-[#3b3b3b]" />
      </div>

      <div className="absolute bottom-0 left-0 flex h-7 w-[63px] gap-1 border border-black bg-linear-to-b from-[#d0d0d0] to-[#8a8a8a] pl-px pt-px">
        <div className="h-6 w-6 rounded-[3px] border-2 border-[#111] bg-[#aaa]"><svg viewBox="0 0 20 20" className="h-5 w-5" stroke="#111"><path d="M10 4v6" strokeWidth="2.500" /><path d="M6 9h8l-4 4z" fill="#111" /><path d="M3 14.500h14" /><path d="M3 17h14" strokeWidth="3" strokeDasharray="1 1.500" /></svg></div>
        <div className="h-6 w-6 rounded-[3px] border-2 border-[#222] bg-[#ffcb1f]"><svg viewBox="0 0 20 20" className="h-5 w-5"><path d="M2 16l3-5v5l4-8v7l4-10v9l4-6v6" fill="none" stroke="#a86400" strokeWidth="1.800" /></svg></div>
      </div>
    </div>
  );
}

function Grasshopper() {
  return (
    <div className="absolute left-[586px] top-0 flex h-[659px] w-[790px] flex-col border-b-2 border-l-2 border-[#a4a6a9] bg-[#eff0f2] shadow-[-2px_3px_5px_#0004]">
      <Strip start={588} className="h-[29px] shrink-0 text-black" items={[[599, 18, "File"], [636, 20, "Edit"], [675, 25, "View"], [719, 38, "Display"], [776, 44, "Solution"], [839, 25, "Help"]]} render={([, w, t]) => <T w={w} className="pt-px">{t}</T>} />
      <Strip start={588} className="h-[22px] shrink-0 border-b border-[#aaa] text-[#7b7b7b]" items={[[595, 20, "Prm"], [623, 24, "Math"], [672, 16, "Set"], [706, 19, "Vec"], [741, 18, "Crv"], [775, 14, "Srf"], [806, 21, "Msh"], [845, 12, "Int"], [873, 23, "Trns"], [912, 17, "Dis"], [945, 15, "M+"], [978, 34, "DIVA 4"], [1029, 16, "Fly"], [1060, 26, "Extra"], [1103, 45, "Mosquito"], [1166, 16, "Wb"], [1200, 8, "G"], [1229, 7, "B"], [1257, 7, "P"], [1283, 9, "M"], [1313, 7, "K"], [1341, 7, "K"]]} render={([, w, t]) => t === "Math"
        ? <div className="flex h-full w-[42px] items-center justify-center rounded-t-lg border border-b-0 border-[#999] pb-[2px] pr-[3px] text-black"><T w={w}>{t}</T></div>
        : <T w={w} className="pt-px">{t}</T>} />
      <Ribbon />
      <div className="mt-[12px] flex h-8 shrink-0 items-center border-t-2 border-[#888] pl-[3px]">
        <svg viewBox="0 0 22 24" className="h-6 w-[22px]"><path d="M3 10V1.500h10l4 3.500v8" fill="#fff" stroke="#555" /><path d="M1.500 22V9h5l2-2h9l-.500 5v10z" fill="#4fae18" stroke="#2c6d08" /><path d="M1.500 22l2-9h15l-1 9z" fill="#93dc4a" stroke="#2c6d08" /></svg>
        <svg viewBox="0 0 22 24" className="ml-[8px] h-6 w-[22px]"><path d="M.5 2.500h21v20H3l-2.500-3z" fill="#2384e0" stroke="#123a70" /><path d="M4 3h14v10H4z" fill="#dfe3ea" /><path d="M6 16h10v6H6z" fill="#ccd4e0" stroke="#123a70" /><path d="M7 17h4v5H7z" fill="#123a70" /></svg>
        <div className="ml-[8px] h-[22px] w-px bg-[#bbb]" />
        <div className="ml-[4px] flex h-[23px] w-[136px] items-center justify-between border border-[#777] bg-[#f0f1f3] px-[3px] text-black"><T w={28}>163%</T><svg viewBox="0 0 10 6" className="mr-px h-[6px] w-[10px]"><path d="M1 1l4 4 4-4" fill="none" stroke="#555" /></svg></div>
        <svg viewBox="0 0 24 24" className="ml-[5px] h-6 w-6" fill="none" stroke="#111"><path d="M2.500 9V3H9M15 3h6.500v6M21.500 15v6.500H15M9 21.500H2.500V15" strokeWidth="3.500" /><path d="M9 9l6 6M15 9l-6 6" strokeWidth="2" stroke="#333" /></svg>
        <svg viewBox="0 0 6 4" className="ml-[5px] h-1 w-[6px]"><path d="M0 0h6l-3 3.500z" fill="#111" /></svg>
        <svg viewBox="0 0 22 16" className="ml-[7px] h-4 w-[22px]"><path d="M1 8q10-13 20 0q-10 12-20 0z" fill="#fff" stroke="#111" strokeWidth="1.500" /><circle cx="11" cy="8" r="5" fill="#3a9ad9" stroke="#134" /><circle cx="11" cy="8" r="2" fill="#111" /></svg>
        <svg viewBox="0 0 6 4" className="ml-[7px] h-1 w-[6px]"><path d="M0 0h6l-3 3.500z" fill="#111" /></svg>
        <svg viewBox="0 0 24 22" className="ml-[7px] h-[22px] w-6"><path d="M1 6q4-2 4 3t-1 6 6 5" fill="none" stroke="#400" strokeWidth="1.500" /><path d="M9 20l3-9 7-8 3-2v9l-5 7z" fill="#e92c22" /><path d="M8 21l3-7 5 4z" fill="#500" /><path d="M13 11l4 4M17 6l4 3" stroke="#ff9a8e" strokeWidth="1.500" /></svg>
      </div>
      <Canvas />
      <div className="mt-px flex h-[23px] shrink-0 items-center border-t border-[#ccc] pl-[2px] text-black">
        <svg viewBox="0 0 16 16" className="mr-[3px] h-4 w-4"><circle cx="8" cy="8" r="7.500" fill="#155ea9" stroke="#0b2454" /><path d="M3 5q1-3 4-3.500M13 11q-1 3-4 3.500" stroke="#55c5f0" strokeWidth="2" fill="none" /><path d="M8 3v6M8 10.500v2.500" stroke="#fff" strokeWidth="2.500" /></svg>
        <T w={194} className="pt-[2px]">Autosave complete (14 seconds ago)</T>
      </div>
    </div>
  );
}

const apps = [
  [2, 28, <path d="M6 8l7-1v6.500H6zM14 7l8-1v7.500h-8zM6 14.500h7V21l-7-1zM14 14.500h8V22l-8-1z" fill="#fff" stroke="none" />],
  [38, 28, <circle cx="14" cy="14" r="6.500" stroke="#fff" strokeWidth="2" />],
  [74, 28, <g stroke="#fff"><path d="M7 10h10v8H7zM6.500 7v-1M17.500 6v2M6 7.500h11M6 20.500h11M6.500 20v2M17.500 20v2M20.500 6v4M20.500 16v6" /><rect x="19.500" y="11.500" width="2" height="2" fill="#fff" /></g>],
  [113, 28, <g stroke="#fff"><circle cx="14" cy="14" r="8" fill="#00979c" stroke="none" /><circle cx="10.500" cy="14" r="2.500" strokeWidth="1.300" /><circle cx="17.500" cy="14" r="2.500" strokeWidth="1.300" /></g>],
  [150, 28, <g><circle cx="14" cy="14" r="8" fill="#0a0a0a" stroke="none" /><Tx y={18.500} x={15} s={13} c="#fff">β</Tx><path d="M10 10h3M11.500 10v9" stroke="#fff" /></g>],
  [187, 28, <g stroke="none"><path d="M6 12l8-5 8 5v9H6z" fill="#fff" /><path d="M7.500 11.500h13l-6.500 4z" fill="#17344a" /></g>],
  [224, 28, <g stroke="none"><path d="M6 8h6l2 2h8v11H6z" fill="#fdd663" /><path d="M6 12h16v2H6z" fill="#fff0a8" /><path d="M9 21v-6h10v6h-3v-3h-4v3z" fill="#2b9fe0" /></g>, true],
  [261, 28, <g stroke="none"><rect x="6" y="6" width="16" height="16" fill="#111" /><path d="M6 7q8-1 15 2l-3 6-3 1-1 5-4-3 1-4-5-2z" fill="#c8c8c8" /><path d="M7 8l5 0 3 4-5 2zM12 15l4-2v2l-3 3z" fill="#333" /></g>],
  [298, 28, <path d="M8.500 6.500h8l4 4v11.500h-12zM16 7v4h4" fill="#f3f3f3" stroke="#888" />],
  [335, 28, <g stroke="none"><circle cx="14" cy="14.500" r="8" fill="#ff8a1e" /><path d="M14 7q8 1 7 9-3-6-7-3z" fill="#ffcf30" /><circle cx="14" cy="14" r="4.500" fill="#3156b8" /><path d="M6 12q3-1 6 2l4 1q-1 4-6 3z" fill="#e8411c" /></g>, true],
  [372, 28, <g><rect x="6" y="6" width="16" height="16" fill="#111" stroke="none" /><path d="M6 8l6 5 1-6 2 2 0 5 6 2-4 3-1 3-5 0-2-6z" fill="#f2f2f2" stroke="none" /><path d="M12 15l3 2-2 3" stroke="#111" /><Tx x={19} y={13} s={8} c="#fff">6</Tx></g>, true],
  [409, 28, <g><path d="M9 7h13l-2 15H7z" fill="#c5e6f2" stroke="#789" /><path d="M10 11h9M10 13.500h9M9.500 16h9M9 18.500h9" stroke="#4a8ca8" /><path d="M9 6.500h13" stroke="#eee" strokeWidth="2" strokeDasharray="1 1" /></g>, true],
  [446, 28, <g><rect x="6.500" y="6.500" width="15" height="15" fill="#0a1c2e" stroke="#20c5f5" strokeWidth="1.300" /><Tx x={14} y={18} s={9} b="normal" c="#30c8f8">Ps</Tx></g>, true],
];

function Taskbar() {
  return (
    <div className="flex h-[30px] items-center bg-linear-to-r from-[#1a364b] via-[#0f2b41] via-15% to-[#17344a] to-30% text-white">
      <Strip className="h-[30px] w-[1169px]" items={apps} render={([, , d, on]) => (
        <div className="flex h-[30px] w-7 flex-col"><Ic>{d}</Ic><div className={"h-[2px] w-7 " + (on ? "bg-[#84c4ee]" : "")} /></div>
      )} />
      <svg viewBox="0 0 28 28" className="h-7 w-7" fill="none" stroke="#fff" strokeWidth="1.300"><circle cx="18" cy="9" r="2.700" /><path d="M14 16q4-7 8-1" /><circle cx="12" cy="14" r="2.500" /><path d="M8 21q4-8 8 0" /></svg>
      <svg viewBox="0 0 14 8" className="ml-[9px] h-2 w-[14px]"><path d="M1 7l6-6 6 6" fill="none" stroke="#fff" strokeWidth="1.300" /></svg>
      <svg viewBox="0 0 16 16" className="ml-[10px] h-4 w-4"><path d="M1 4l3.500-2L8 4 4.500 6zM8 4l3.500-2L15 4l-3.500 2zM1 8.500l3.500-2 3.500 2-3.500 2zM8 8.500l3.500-2 3.500 2-3.500 2zM4.500 12L8 10l3 2-3 2z" fill="#aeb7bf" /><circle cx="11.500" cy="11.500" r="4" fill="#e22b32" /><path d="M10 10l3 3M13 10l-3 3" stroke="#fff" /></svg>
      <T w={42} className="ml-[13px]">4:10 PM</T>
      <svg viewBox="0 0 16 16" className="ml-[22px] h-4 w-4"><path d="M0 0h16v12h-5v4l-4-4H0z" fill="#fff" /><path d="M3 3.500h10M3 6h10M3 8.500h7" stroke="#17344a" /></svg>
      <div className="ml-[20px] h-[30px] w-px bg-[#6c7f8d]" />
    </div>
  );
}

export default function App() {
  return (
    <div className="relative h-[736px] w-[1361px] overflow-hidden font-['Open_Sans',sans-serif] text-[12px] leading-none text-[#111]">
      <Rhino />
      <Taskbar />
      <Grasshopper />
    </div>
  );
}
